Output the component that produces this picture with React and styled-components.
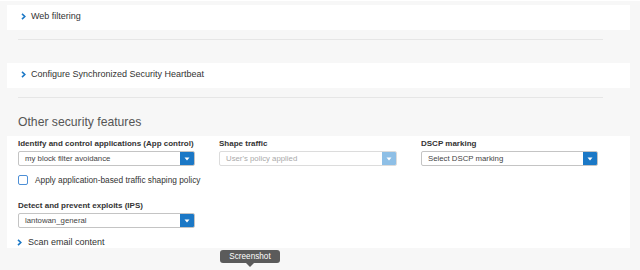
import React from "react";
import styled, { createGlobalStyle } from "styled-components";

const Global = createGlobalStyle`
  html, body { margin: 0; padding: 0; background: #f7f7f7; }
  body { font-family: "Liberation Sans", Arial, sans-serif; color: #333; }
`;

const Page = styled.div`
  position: relative;
  width: 640px;
  height: 270px;
  overflow: hidden;
  background: #f7f7f7;
`;

const TopEdge = styled.div`
  height: 1px;
  background: #ffffff;
  margin-bottom: 4px;
`;

const Column = styled.div`
  margin: 0 10px 0 7px;
`;

const Card = styled.div`
  background: #fff;
  height: 25px;
  box-sizing: border-box;
  display: flex;
  align-items: flex-start;
  padding: 5px 0 0 14px;
`;

const Header = styled.div`
  display: flex;
  align-items: center;
  gap: ${(p) => p.$gap || 5}px;
  font-size: ${(p) => p.$size || 9}px;
  line-height: 12px;
  color: #333;
`;

const Divider = styled.div`
  height: 1px;
  background: #e6e6e6;
  margin: ${(p) => p.$top}px 27px ${(p) => p.$bottom}px 11px;
`;

const Heading = styled.h2`
  margin: 0 0 0 11px;
  box-sizing: border-box;
  padding-top: 16px;
  font-size: 12.2px;
  line-height: 16px;
  font-weight: 400;
  color: #555;
  height: 38px;
`;

const Panel = styled.div`
  background: #fff;
  height: 112px;
  padding: 2px 11px 0;
  box-sizing: border-box;
`;

const Grid = styled.div`
  display: grid;
  grid-template-columns: 177px 178px 177px;
  column-gap: 24px;
`;

const Field = styled.div`
  display: flex;
  flex-direction: column;
`;

const Label = styled.div`
  font-size: 8px;
  font-weight: 700;
  color: #333;
  height: 11px;
  line-height: 11px;
  margin-bottom: 2px;
  white-space: nowrap;
`;

const Select = styled.div`
  display: flex;
  height: 15px;
  box-sizing: border-box;
  border: 1px solid ${(p) => (p.$disabled ? "#dcdcdc" : "#c4c4c4")};
  border-radius: 2px;
  background: #fff;
  overflow: hidden;
`;

const Value = styled.div`
  flex: 1;
  font-size: 7.8px;
  line-height: 13px;
  padding-left: 6px;
  color: ${(p) => (p.$muted ? "#aaa" : "#444")};
  white-space: nowrap;
`;

const Arrow = styled.div`
  width: 14px;
  background: ${(p) => (p.$disabled ? "#8ebfe6" : "#1b78c6")};
  display: flex;
  align-items: center;
  justify-content: center;
`;

const Check = styled.label`
  display: flex;
  align-items: center;
  gap: 7px;
  margin-top: 9px;
  font-size: 8.3px;
  color: #333;
  white-space: nowrap;
`;

const Box = styled.span`
  display: block;
  flex: none;
  width: 8px;
  height: 8px;
  border: 1px solid #4d8fd6;
  border-radius: 2px;
  background: #fff;
`;

const IpsBlock = styled.div`
  margin-top: 15px;
  width: 177px;
`;

const ScanRow = styled.div`
  margin-top: 8px;
  margin-left: -1px;
`;

const Tooltip = styled.div`
  position: absolute;
  left: 220px;
  top: 250px;
  width: 60px;
  height: 13px;
  background: #5b5b5b;
  border-radius: 3px;
  color: #fff;
  font-size: 8.2px;
  line-height: 13px;
  text-align: center;
  &::after {
    content: "";
    position: absolute;
    left: 26px;
    top: 13px;
    border-left: 4px solid transparent;
    border-right: 4px solid transparent;
    border-top: 4px solid #5b5b5b;
  }
`;

const Chevron = () => (
  <svg width="5" height="7" viewBox="0 0 5 7">
    <path d="M1 0.8 L3.8 3.5 L1 6.2" fill="none" stroke="#1b78c6" strokeWidth="1.6" />
  </svg>
);

const Caret = () => (
  <svg width="6" height="4" viewBox="0 0 6 4">
    <path d="M0.5 0.5 H5.5 L3 3.5 Z" fill="#fff" />
  </svg>
);

const Dropdown = ({ value, muted, disabled }) => (
  <Select $disabled={disabled}>
    <Value $muted={muted}>{value}</Value>
    <Arrow $disabled={disabled}>
      <Caret />
    </Arrow>
  </Select>
);

export default function App() {
  return (
    <Page>
      <Global />
      <TopEdge />
      <Column>
        <Card>
          <Header>
            <Chevron />
            Web filtering
          </Header>
        </Card>
        <Divider $top={9} $bottom={23} />
        <Card>
          <Header>
            <Chevron />
            Configure Synchronized Security Heartbeat
          </Header>
        </Card>
        <Divider $top={9} $bottom={0} />
        <Heading>Other security features</Heading>
        <Panel>
          <Grid>
            <Field>
              <Label>Identify and control applications (App control)</Label>
              <Dropdown value="my block filter avoidance" />
              <Check>
                <Box />
                Apply application-based traffic shaping policy
              </Check>
            </Field>
            <Field>
              <Label>Shape traffic</Label>
              <Dropdown value="User's policy applied" muted disabled />
            </Field>
            <Field>
              <Label>DSCP marking</Label>
              <Dropdown value="Select DSCP marking" />
            </Field>
          </Grid>
          <IpsBlock>
            <Label>Detect and prevent exploits (IPS)</Label>
            <Dropdown value="lantowan_general" />
          </IpsBlock>
          <ScanRow>
            <Header $size={9} $gap={6}>
              <Chevron />
              Scan email content
            </Header>
          </ScanRow>
        </Panel>
      </Column>
      <Tooltip>Screenshot</Tooltip>
    </Page>
  );
}
